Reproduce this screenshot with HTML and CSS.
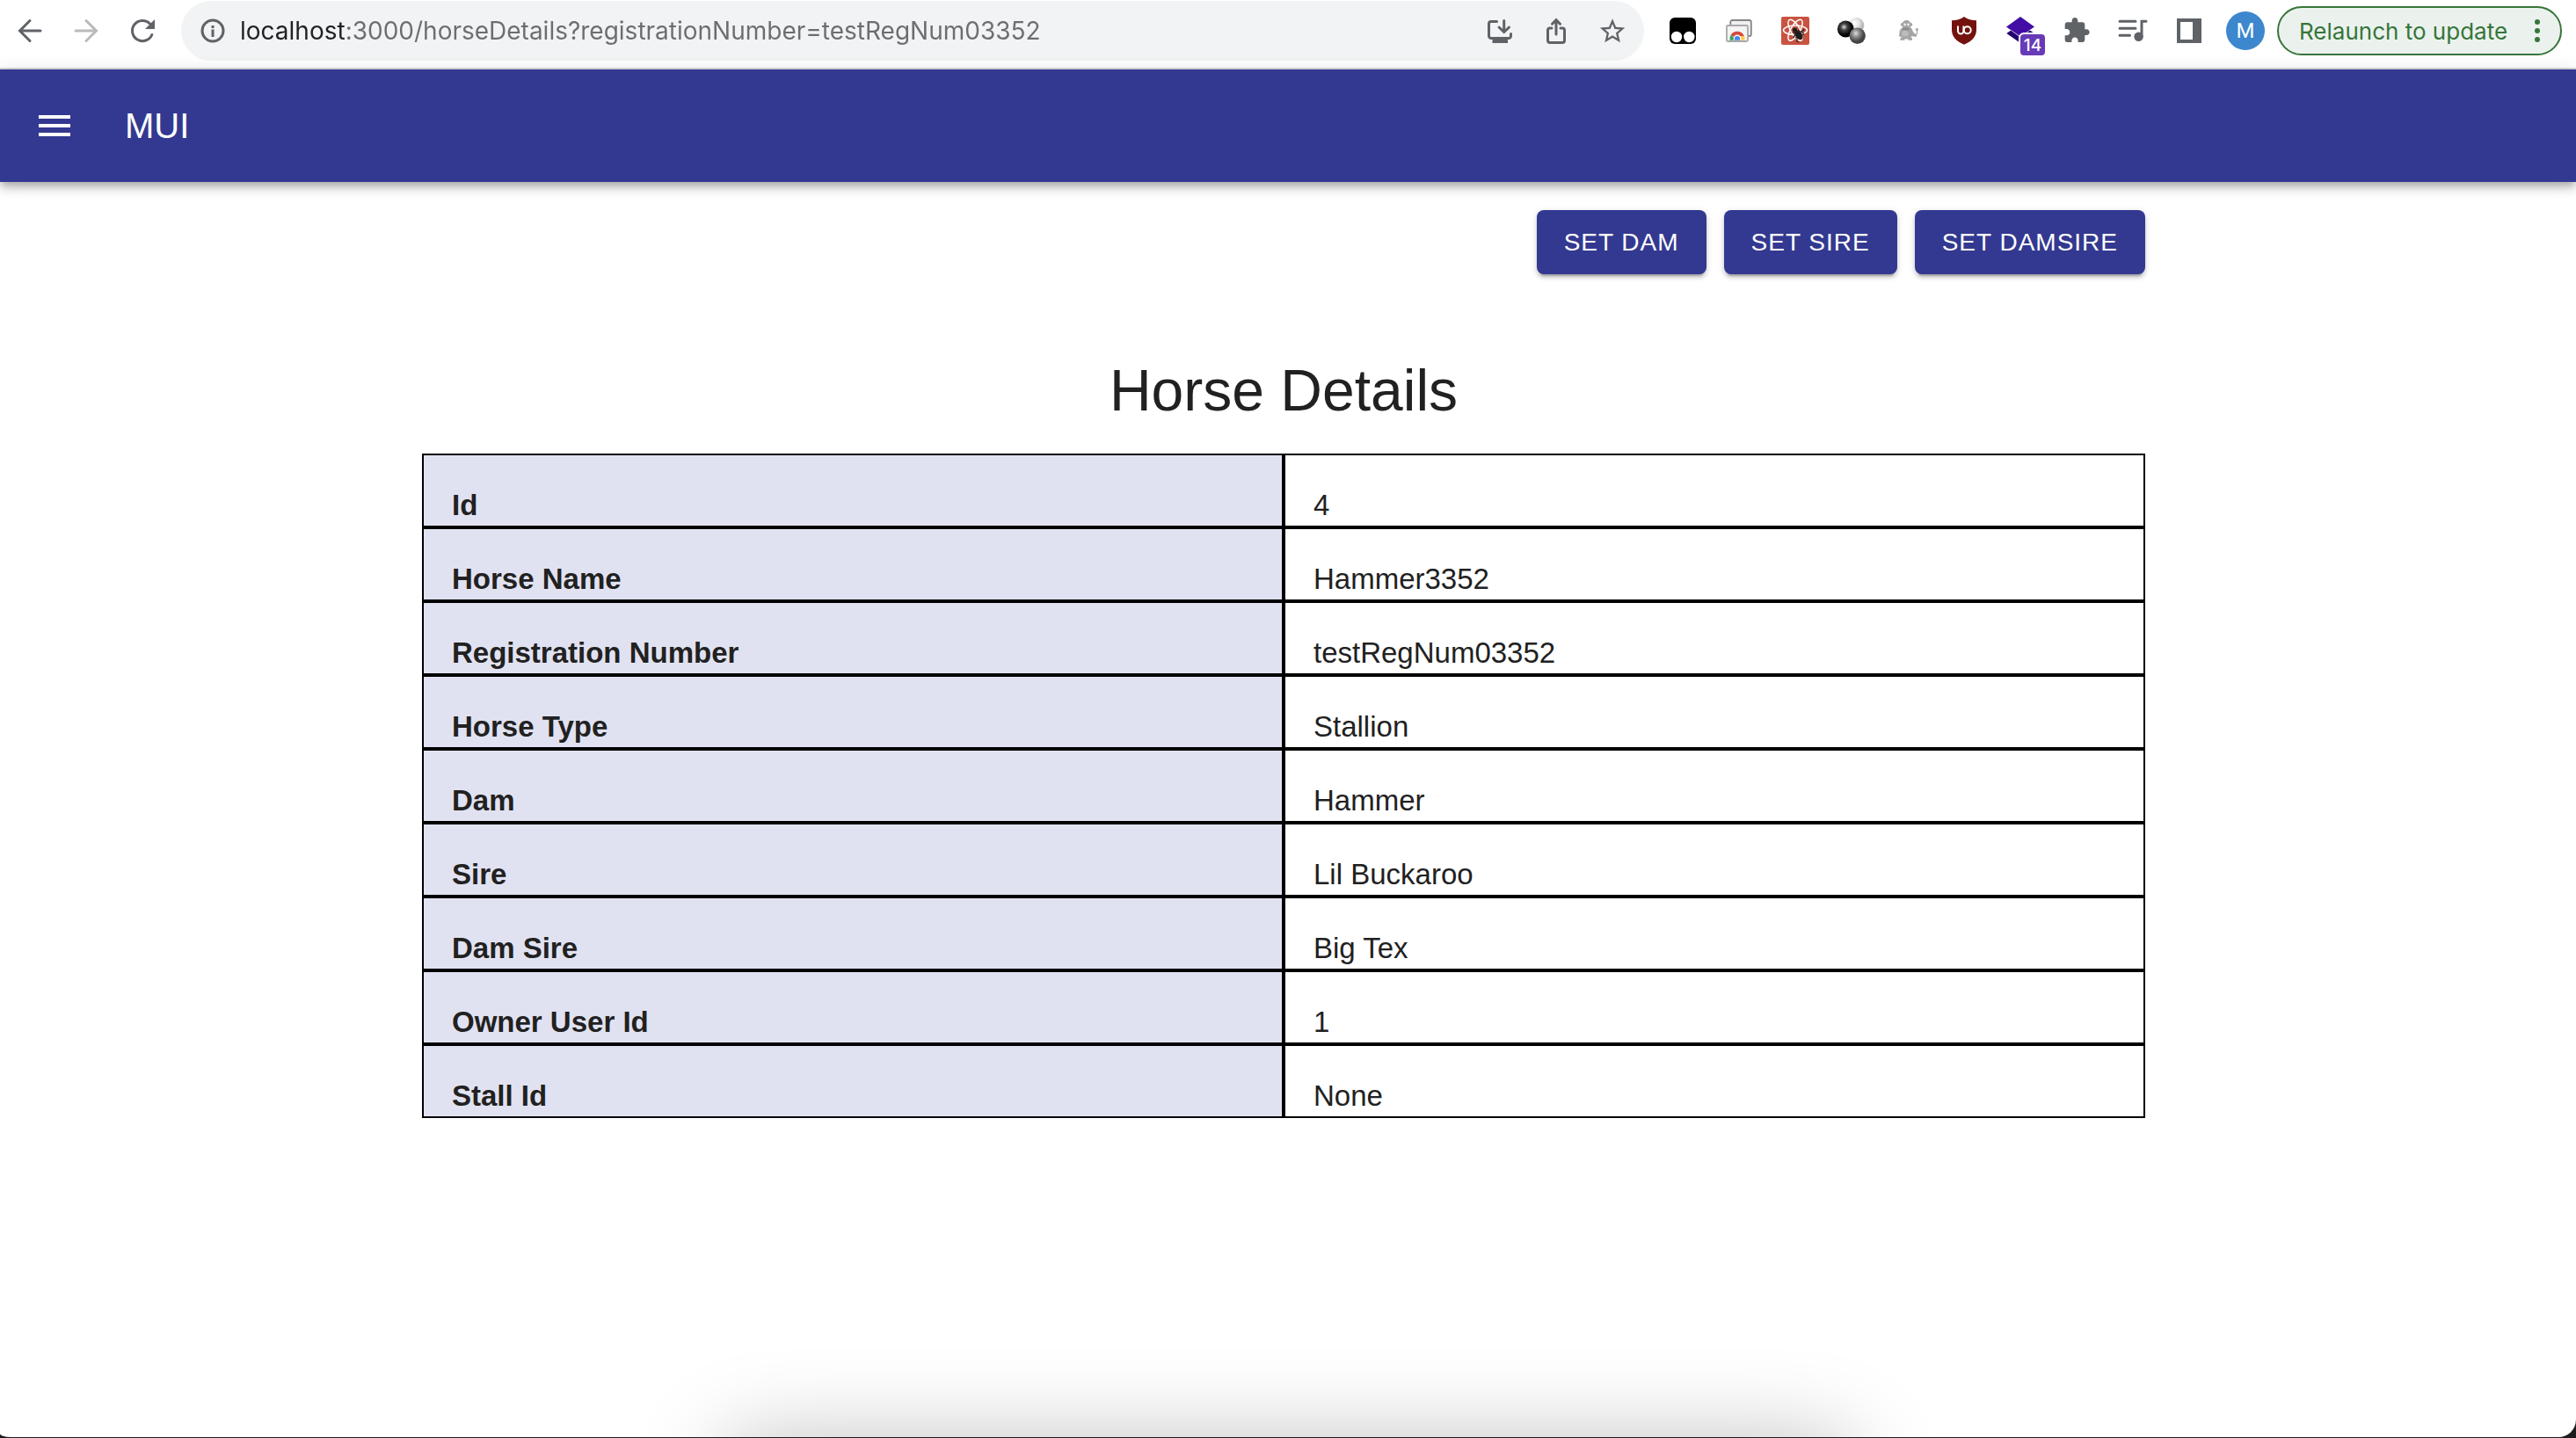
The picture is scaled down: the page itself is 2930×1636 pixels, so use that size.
FILE: index.html
```html
<!DOCTYPE html>
<html lang="en">
<head>
<meta charset="utf-8">
<title>Horse Details</title>
<link rel="stylesheet" href="styles.css">
</head>
<body>
<div class="window">
  <div class="toolbar">
    <div class="icon-group">
      <button class="icon-btn" aria-label="Back"><svg class="icon line" viewBox="0 0 40 40"><path d="M32 20H9M20 8.500L8.500 20 20 31.500"/></svg></button>
      <button class="icon-btn faded" aria-label="Forward"><svg class="icon line" viewBox="0 0 40 40"><path d="M8 20h23M20 8.500L31.500 20 20 31.500"/></svg></button>
      <button class="icon-btn" aria-label="Reload"><svg class="icon line" viewBox="0 0 40 40"><path d="M30.800 24.500A11.600 11.600 0 1 1 28.500 12"/><path class="solid" d="M34 7v11H23z"/></svg></button>
    </div>
    <div class="omnibox">
      <button class="icon-btn" aria-label="Site information"><svg class="icon line" viewBox="0 0 40 40"><circle cx="20" cy="20" r="12"/><path class="solid" d="M18.500 18.500h3V27h-3zM18.500 14h3v3h-3z"/></svg></button>
      <input class="url" type="text" aria-label="Address" value="localhost:3000/horseDetails?registrationNumber=testRegNum03352">
      <div class="icon-group">
        <button class="icon-btn" aria-label="Install app"><svg class="icon line" viewBox="0 0 40 40"><path d="M16.500 9.500H10a2.500 2.500 0 0 0-2.500 2.500v14a2.500 2.500 0 0 0 2.500 2.500h20a2.500 2.500 0 0 0 2.500-2.500v-2.500M24.700 8.500V21M19 16l5.700 5.500L30.500 16"/><path class="solid" d="M11.500 29H29v5H11.500z"/></svg></button>
        <button class="icon-btn" aria-label="Share"><svg class="icon line" viewBox="0 0 40 40"><path d="M15 17h-2a2.500 2.500 0 0 0-2.500 2.500V31a2.500 2.500 0 0 0 2.500 2.500h14a2.500 2.500 0 0 0 2.500-2.500V19.500A2.500 2.500 0 0 0 27 17h-2M20 24V8M15.500 12.200L20 7.700l4.500 4.500"/></svg></button>
        <button class="icon-btn" aria-label="Bookmark"><svg class="icon" viewBox="0 0 40 40"><path transform="translate(3 3.500) scale(1.420)" d="M22 9.240l-7.190-.62L12 2 9.190 8.630 2 9.240l5.460 4.730L5.820 21 12 17.270 18.180 21l-1.630-7.030L22 9.240zM12 15.400l-3.760 2.270 1-4.280-3.320-2.880 4.380-.38L12 6.100l1.710 4.040 4.380.38-3.320 2.880 1 4.280L12 15.400z"/></svg></button>
      </div>
    </div>
    <div class="icon-group">
      <button class="icon-btn" aria-label="Tampermonkey"><svg class="icon" viewBox="0 0 40 40"><rect x="5" y="5" width="30" height="30" rx="6" fill="#000"/><circle cx="13" cy="27" r="6.200" fill="#fff"/><circle cx="27.300" cy="27" r="6.200" fill="#fff"/></svg></button>
      <button class="icon-btn" aria-label="Remote desktop"><svg class="icon" viewBox="0 0 40 40"><rect x="10.300" y="8" width="23.500" height="18" rx="2" fill="#f0f0f0" stroke="#858585" stroke-width="1.800"/><rect x="6" y="14" width="24" height="18" rx="1.500" fill="#f4f4f4" stroke="#a9a9a9" stroke-width="1.800"/><path d="M9.500 30.700a8.600 8.600 0 0 1 1.500-6.500l5 6.500z" fill="#34a058"/><path d="M26.500 30.700a8.600 8.600 0 0 0-.7-5H18v5z" fill="#f8cf4c"/><path d="M10.800 24.400a8.700 8.700 0 0 1 15 1.600H18l-3 2z" fill="#d64a3d"/><path d="M13.800 30.700v-2a4.200 4.200 0 0 1 8.400 0v2z" fill="#fff"/><path d="M14.900 30.700v-1.500a3.100 3.100 0 0 1 6.200 0v1.500z" fill="#4a83ee"/></svg></button>
      <button class="icon-btn" aria-label="React developer tools"><svg class="icon" viewBox="0 0 40 40"><rect x="4" y="4" width="32" height="32" rx="2" fill="#c85341"/><g fill="none" stroke="#fff" stroke-width="1.500"><ellipse cx="20" cy="19.300" rx="13.500" ry="5.200"/><ellipse cx="20" cy="19.300" rx="13.500" ry="5.200" transform="rotate(60 20 19.300)"/><ellipse cx="20" cy="19.300" rx="13.500" ry="5.200" transform="rotate(120 20 19.300)"/></g><g fill="#201c1b" stroke="#201c1b" stroke-width="1.200"><circle cx="19.500" cy="19" r="2"/><ellipse cx="24" cy="25" rx="3" ry="5.200" transform="rotate(-40 24 25)"/><path fill="none" d="M17 22l3 1-2 5M20 28l2-1 0 5 2 1M23 19l2 2 4-1 1-2M27 25l3-1M26 22l4 1"/></g></svg></button>
      <button class="icon-btn" aria-label="Spheres extension"><svg class="icon" viewBox="0 0 40 40"><defs><radialGradient id="white-ball" cx=".4" cy=".35"><stop offset="0" stop-color="#fff"/><stop offset=".6" stop-color="#e2e2e2"/><stop offset="1" stop-color="#bbb"/></radialGradient><radialGradient id="black-ball" cx=".4" cy=".38"><stop offset="0" stop-color="#ddd"/><stop offset=".4" stop-color="#444"/><stop offset="1" stop-color="#000"/></radialGradient><radialGradient id="gray-ball" cx=".4" cy=".35"><stop offset="0" stop-color="#ddd"/><stop offset=".5" stop-color="#858585"/><stop offset="1" stop-color="#444"/></radialGradient></defs><circle cx="25.300" cy="14" r="9" fill="url(#white-ball)"/><circle cx="13.300" cy="18" r="9.400" fill="url(#black-ball)"/><circle cx="26.700" cy="25.700" r="9.200" fill="url(#gray-ball)"/></svg></button>
      <button class="icon-btn" aria-label="Creature extension"><svg class="icon" viewBox="0 0 40 40"><g fill="#a5a5a5"><circle cx="18.500" cy="13" r="5"/><circle cx="13.800" cy="13" r="2"/><circle cx="23.300" cy="13" r="2"/><ellipse cx="18.500" cy="22" rx="7.500" ry="7.500"/><path d="M11 17l-1 9 3 2zM12 28h4.500v2.700H11zM20 28h5v2.700h-4.500zM24 20l5 4 1-1v-4h1.200v4l-2 4-5-1z"/><circle cx="30.300" cy="18.500" r="1.600"/></g><circle cx="16.700" cy="13" r="1.400" fill="#eee"/><circle cx="20.500" cy="13" r="1.400" fill="#eee"/><ellipse cx="17.500" cy="18" rx="4" ry="1.600" fill="#8a8a8a"/><ellipse cx="17" cy="23" rx="4" ry="3.500" fill="#bbb"/></svg></button>
      <button class="icon-btn" aria-label="uBlock Origin"><svg class="icon" viewBox="0 0 40 40"><path d="M20 4c4 3 9 4.300 14 4.300V19c0 8-5.500 13-14 16.800C11.500 32 6 27 6 19V8.300C11 8.300 16 7 20 4z" fill="#74130e"/><g fill="none" stroke="#fff" stroke-width="2"><path d="M13 14.500v5.800a3.200 3.200 0 0 0 6.400 0M19.400 14.500v5.800"/><circle cx="23.700" cy="19.300" r="4"/></g></svg></button>
      <button class="icon-btn badged" aria-label="Layers extension, 14 items"><svg class="icon" viewBox="0 0 40 40"><path d="M20 12l16 11-16 11L4.300 23z" fill="#1f006f"/><path d="M20 3.500l16.500 12L20 27.500 3.500 15.500z" fill="#fff"/><path d="M20 4l16 11.500L20 26.500 4 15.500z" fill="#430da5"/></svg><span class="badge">14</span></button>
      <button class="icon-btn" aria-label="Extensions"><svg class="icon" viewBox="0 0 40 40"><path transform="translate(4 3.700) scale(1.333)" d="M20.500 11H19V7c0-1.100-.9-2-2-2h-4V3.500C13 2.120 11.880 1 10.500 1S8 2.120 8 3.500V5H4c-1.100 0-1.990.9-1.990 2v3.800H3.500c1.490 0 2.700 1.210 2.700 2.700s-1.210 2.700-2.700 2.700H2V20c0 1.100.9 2 2 2h3.800v-1.500c0-1.490 1.210-2.700 2.700-2.700 1.490 0 2.700 1.210 2.700 2.700V22H17c1.100 0 2-.9 2-2v-4h1.500c1.380 0 2.500-1.120 2.500-2.500S21.880 11 20.500 11z"/></svg></button>
      <button class="icon-btn" aria-label="Media control"><svg class="icon line" viewBox="0 0 40 40"><path d="M5 9.300h18M5 17.300h18M5 25.300h11.500M30 27V9.300h5"/><circle class="solid" cx="26.500" cy="26.700" r="5.200"/></svg></button>
      <button class="icon-btn" aria-label="Side panel"><svg class="icon" viewBox="0 0 40 40"><path fill-rule="evenodd" d="M6 6h28v28H6zM10 10v20h14V10z"/></svg></button>
    </div>
    <div class="profile">
      <button class="avatar" aria-label="Profile M">M</button>
      <button class="relaunch"><span>Relaunch to update</span><svg class="dots" viewBox="0 0 6 28"><circle cx="3" cy="4" r="3"/><circle cx="3" cy="14" r="3"/><circle cx="3" cy="24" r="3"/></svg></button>
    </div>
  </div>

  <header class="app-bar">
    <button class="menu-btn" aria-label="Menu"><svg class="menu-icon" viewBox="0 0 24 24"><path d="M3 18h18v-2H3v2zm0-5h18v-2H3v2zm0-7v2h18V6H3z"/></svg></button>
    <div class="brand">MUI</div>
  </header>

  <main class="page">
    <div class="actions">
      <button class="action">SET DAM</button>
      <button class="action">SET SIRE</button>
      <button class="action">SET DAMSIRE</button>
    </div>
    <h1 class="title">Horse Details</h1>
    <table class="details">
      <tbody>
        <tr><th scope="row">Id</th><td>4</td></tr>
        <tr><th scope="row">Horse Name</th><td>Hammer3352</td></tr>
        <tr><th scope="row">Registration Number</th><td>testRegNum03352</td></tr>
        <tr><th scope="row">Horse Type</th><td>Stallion</td></tr>
        <tr><th scope="row">Dam</th><td>Hammer</td></tr>
        <tr><th scope="row">Sire</th><td>Lil Buckaroo</td></tr>
        <tr><th scope="row">Dam Sire</th><td>Big Tex</td></tr>
        <tr><th scope="row">Owner User Id</th><td>1</td></tr>
        <tr><th scope="row">Stall Id</th><td>None</td></tr>
      </tbody>
    </table>
  </main>
  <div class="dock-shadow"></div>
</div>
</body>
</html>
```
FILE: styles.css
```css
* {
  box-sizing: border-box;
}

body {
  margin: 0;
  padding-bottom: 1px;
  background: #1c1c1c;
  color: #212121;
  font-family: "Liberation Sans", Arial, sans-serif;
}

button {
  margin: 0;
  padding: 0;
  border: 0;
  background: none;
  color: inherit;
  font: inherit;
}

.window {
  display: flex;
  flex-direction: column;
  min-height: calc(100vh - 1px);
  overflow: hidden;
  border-radius: 0 0 20px 12px / 0 0 20px 4px;
  background: #fff;
}

/* Browser toolbar */
.toolbar {
  display: flex;
  align-items: center;
  gap: 24px;
  padding: 1px 16px 8px 14px;
  border-bottom: 2px solid #dadada;
  color: #5f6368;
  font-family: Inter, sans-serif;
}

.icon-group {
  display: flex;
  gap: 24px;
}

.icon-btn {
  display: block;
  width: 40px;
  height: 40px;
}

.faded {
  color: #bababa;
}

.icon {
  display: block;
  width: 40px;
  height: 40px;
  fill: currentColor;
}

.line {
  fill: none;
  stroke: currentColor;
  stroke-width: 3px;
  stroke-linecap: round;
}

.line .solid {
  fill: currentColor;
  stroke: none;
}

.omnibox {
  display: flex;
  flex: 1;
  align-items: center;
  gap: 11px;
  height: 68px;
  padding: 0 16px;
  border-radius: 34px;
  background: #f1f3f4;
}

.url {
  flex: 1;
  min-width: 0;
  height: 40px;
  padding: 0;
  border: 0;
  outline: 0;
  background: linear-gradient(90deg, #202124 121px, #6b6d70 121px) text;
  color: transparent;
  font-family: Inter, sans-serif;
  font-size: 28px;
}

.badged {
  position: relative;
}

.badge {
  position: absolute;
  top: 22px;
  left: 18px;
  width: 32px;
  height: 28px;
  border: 2px solid #fff;
  border-radius: 6px;
  background: #673ab7;
  color: #fff;
  font-size: 19px;
  font-weight: 500;
  line-height: 26px;
  text-align: center;
}

.profile {
  display: flex;
  align-items: center;
  gap: 14px;
  margin-left: -2px;
}

.avatar {
  width: 44px;
  height: 44px;
  border-radius: 50%;
  background: #3c87cd;
  color: #fff;
  font-family: Roboto, sans-serif;
  font-size: 24px;
  line-height: 44px;
}

.relaunch {
  display: flex;
  align-items: center;
  justify-content: space-between;
  width: 324px;
  height: 56px;
  padding: 0 23px;
  border: 2px solid #37753a;
  border-radius: 28px;
  background: #ebf2ee;
  color: #37753a;
  font-size: 26px;
}

.dots {
  width: 6px;
  height: 28px;
  fill: currentColor;
}

/* Application bar */
.app-bar {
  display: flex;
  align-items: center;
  gap: 32px;
  height: 128px;
  padding: 0 14px;
  background: #333990;
  color: #fff;
  box-shadow: 0 4px 8px -2px rgba(0, 0, 0, 0.2), 0 8px 10px rgba(0, 0, 0, 0.14), 0 2px 20px rgba(0, 0, 0, 0.12);
}

.menu-btn {
  padding: 24px;
}

.menu-icon {
  display: block;
  width: 48px;
  height: 48px;
  fill: currentColor;
}

.brand {
  font-size: 40px;
  line-height: 64px;
}

.page {
  width: calc(100% - 10px);
  max-width: 1960px;
  margin: 0 auto;
  padding-top: 32px;
  position: relative;
  right: 5px;
}

.actions {
  display: flex;
  justify-content: flex-end;
  gap: 20px;
}

.action {
  height: 73px;
  padding: 0 31px;
  border-radius: 8px;
  background: #333990;
  color: #fff;
  font-size: 28px;
  letter-spacing: 1px;
  box-shadow: 0 6px 2px -4px rgba(0, 0, 0, 0.2), 0 4px 4px rgba(0, 0, 0, 0.14), 0 2px 10px rgba(0, 0, 0, 0.12);
}

.title {
  margin: 94px 0 34px;
  font-size: 66px;
  font-weight: 400;
  line-height: 76px;
  text-align: center;
}

.details {
  width: 100%;
  border-spacing: 0;
  table-layout: fixed;
  font-size: 33px;
  line-height: 46px;
}

.details th,
.details td {
  padding: 34px 32px 0;
  border: 2px solid #000;
  text-align: left;
}

.details th {
  background: #e1e2f1;
}

/* Soft shadow cast from below the window */
.dock-shadow {
  height: 100px;
  margin-top: auto;
  overflow: hidden;
}

.dock-shadow::after {
  content: "";
  display: block;
  width: 44%;
  height: 100px;
  margin: 104px auto 0;
  border-radius: 40px;
  box-shadow: 0 0 100px rgba(0, 0, 0, 0.26);
}
```
